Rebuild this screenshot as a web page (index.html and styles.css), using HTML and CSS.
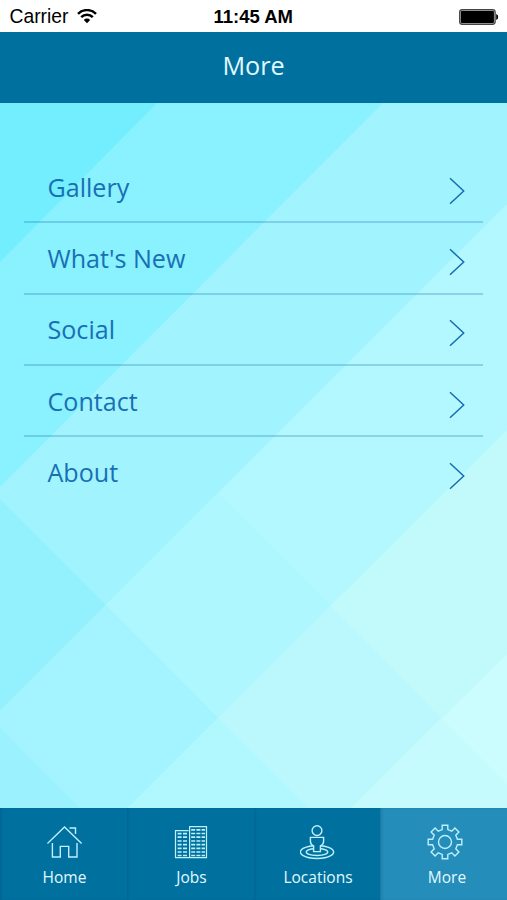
FILE: index.html
```html
<!DOCTYPE html>
<html lang="en">
  <head>
    <meta charset="UTF-8" />
    <meta name="viewport" content="width=device-width, initial-scale=1.0" />
    <title>More</title>
    <link rel="stylesheet" href="styles.css">
  </head>
  <body>
    <div class="status-bar">
      <div class="carrier">
        <span>Carrier</span>
        <svg class="wifi" width="20" height="15" viewBox="0 0 20 15">
          <path d="M1 4.9 A12.6 12.6 0 0 1 19 4.9" />
          <path d="M4.2 8.2 A8.2 8.2 0 0 1 15.8 8.2" />
          <path class="wifi-dot" d="M6.8 10.9 A4.5 4.5 0 0 1 13.2 10.9 L10 14.2 Z" />
        </svg>
      </div>
      <div class="time">11:45 AM</div>
      <div class="battery">
        <svg width="40" height="16" viewBox="0 0 40 16">
          <rect x="0.6" y="0.6" width="35.6" height="14.8" rx="2.6" fill="#aaa" stroke="#444" stroke-width="1.1" />
          <rect x="1.9" y="1.9" width="33" height="12.2" rx="1" />
          <path d="M37.2 5 Q39.2 5.6 39.2 8 Q39.2 10.4 37.2 11 Z" />
        </svg>
      </div>
    </div>

    <header class="nav-bar">
      <h1>More</h1>
    </header>

    <main class="content">
      <svg class="backdrop" viewBox="0 103 507 705" preserveAspectRatio="none">
        <rect x="0" y="103" width="507" height="705" fill="#72eefe" />
        <!-- diagonal bands -->
        <path fill="#8af1fe" d="M157 103 H507 V808 H0 V262 Z" />
        <path fill="#a1f4fe" d="M383 103 H507 V808 H0 V487 Z" />
        <path fill="#b3f8fe" d="M507 204 V808 H0 V711 Z" />
        <path fill="#c2fafb" d="M507 430 V808 H128 Z" />
        <path fill="#cbfcfe" d="M507 654 V808 H351 Z" />
        <!-- darker tiles at the bottom -->
        <path fill="#93f1fe" d="M0 499 L106 605 L0 711 Z" />
        <path fill="#aff7fe" d="M106 605 L218 493 L331 606 L218 718 Z" />
        <path fill="#a3f4fe" d="M106 605 L218 718 L128 808 H80 L0 727 V711 Z" />
        <path fill="#9bf2fe" d="M0 727 L80 808 H0 Z" />
        <path fill="#bbf8fe" d="M331 606 L441 718 L351 808 H308 L218 718 Z" />
        <path fill="#b1f7fe" d="M218 718 L308 808 H128 Z" />
        <path fill="#c6fbfd" d="M441 718 L507 784 V808 H351 Z" />
      </svg>

      <ul class="menu">
        <li>
          <span>Gallery</span>
          <svg class="chevron" width="16" height="28" viewBox="0 0 16 28"><path d="M1 1.3 L14.7 14 L1 26.7" /></svg>
        </li>
        <li>
          <span>What's New</span>
          <svg class="chevron" width="16" height="28" viewBox="0 0 16 28"><path d="M1 1.3 L14.7 14 L1 26.7" /></svg>
        </li>
        <li>
          <span>Social</span>
          <svg class="chevron" width="16" height="28" viewBox="0 0 16 28"><path d="M1 1.3 L14.7 14 L1 26.7" /></svg>
        </li>
        <li>
          <span>Contact</span>
          <svg class="chevron" width="16" height="28" viewBox="0 0 16 28"><path d="M1 1.3 L14.7 14 L1 26.7" /></svg>
        </li>
        <li>
          <span>About</span>
          <svg class="chevron" width="16" height="28" viewBox="0 0 16 28"><path d="M1 1.3 L14.7 14 L1 26.7" /></svg>
        </li>
      </ul>
    </main>

    <nav class="tab-bar">
      <div class="tab">
        <svg width="36" height="36" viewBox="0 0 36 36">
          <path d="M0.4 19.5 L17.5 3 L34.6 19.5" />
          <path d="M22.5 4 H28.5 V10" />
          <path d="M5.4 19 V33 H13.3 V22.4 H21.7 V33 H30 V19" />
        </svg>
        <span>Home</span>
      </div>
      <div class="tab">
        <svg width="36" height="36" viewBox="0 0 36 36">
          <path d="M14.6 6.6 H1.5 V33.6 H32.5 V2.6 H15.6 V33.6" stroke-width="1.2" />
          <path class="windows" d="M3.6 9.6H7.6M9 9.6H13M3.6 13.2H7.6M9 13.2H13M3.6 17H7.6M9 17H13M3.6 20.6H7.6M9 20.6H13M3.6 24.4H7.6M9 24.4H13M3.6 28H7.6M9 28H13M3.6 31.5H7.6M9 31.5H13" />
          <path class="windows" d="M17.2 5.8H21.2M22.4 5.8H26.4M27.6 5.8H31M17.2 9.5H21.2M22.4 9.5H26.4M27.6 9.5H31M17.2 13.2H21.2M22.4 13.2H26.4M27.6 13.2H31M17.2 17H21.2M22.4 17H26.4M27.6 17H31M17.2 20.6H21.2M22.4 20.6H26.4M27.6 20.6H31M17.2 24.4H21.2M22.4 24.4H26.4M27.6 24.4H31M17.2 28H21.2M22.4 28H26.4M27.6 28H31M17.2 31.5H21.2M22.4 31.5H26.4M27.6 31.5H31" />
        </svg>
        <span>Jobs</span>
      </div>
      <div class="tab">
        <svg width="36" height="36" viewBox="0 0 36 36">
          <circle cx="17" cy="6.6" r="4.9" />
          <path d="M10.4 13.4 H23.6 V17.2 Q23.6 20.4 20.4 22 V27.6 H13.6 V22 Q10.4 20.4 10.4 17.2 Z" />
          <path d="M13.6 21.7 A16.6 6.5 0 1 0 20.4 21.7" />
          <path d="M13.6 24.7 A10.8 3.5 0 1 0 20.4 24.7" />
        </svg>
        <span>Locations</span>
      </div>
      <div class="tab active">
        <svg width="36" height="36" viewBox="0 0 36 36">
          <circle cx="18" cy="18" r="6.5" />
          <path d="M15.2 1.2 H20.8 V5.6 L24.8 7.2 L27.9 4.1 L31.9 8.1 L28.8 11.2 L30.4 15.2 H34.8 V20.8 H30.4 L28.8 24.8 L31.9 27.9 L27.9 31.9 L24.8 28.8 L20.8 30.4 V34.8 H15.2 V30.4 L11.2 28.8 L8.1 31.9 L4.1 27.9 L7.2 24.8 L5.6 20.8 H1.2 V15.2 H5.6 L7.2 11.2 L4.1 8.1 L8.1 4.1 L11.2 7.2 L15.2 5.6 Z" />
        </svg>
        <span>More</span>
      </div>
    </nav>
  </body>
</html>
```
FILE: styles.css
```css
* {
  margin: 0;
  padding: 0;
  box-sizing: border-box;
}

body {
  font-family: 'Open Sans', 'Noto Sans', sans-serif;
  height: 100vh;
  display: flex;
  flex-direction: column;
  overflow: hidden;
}

.status-bar {
  height: 32px;
  display: grid;
  grid-template-columns: 1fr auto 1fr;
  align-items: center;
  padding: 0 8px 0 9.5px;
  background-color: #fff;
  color: #000;
  font-family: 'Liberation Sans', Arial, sans-serif;
  font-size: 19.3px;
  line-height: 34px;
}

.carrier {
  display: flex;
  align-items: center;
  gap: 9px;
}

.wifi {
  margin-top: -1px;
  fill: none;
  stroke: #000;
  stroke-width: 2.5;
}

.wifi .wifi-dot {
  fill: #000;
  stroke: none;
}

.time {
  margin-left: -2px;
  font-size: 18.5px;
  font-weight: bold;
}

.battery {
  display: flex;
  justify-content: flex-end;
}

.nav-bar {
  height: 71px;
  display: flex;
  justify-content: center;
  background-color: #00719f;
  color: #e2faff;
}

.nav-bar h1 {
  font-size: 25.2px;
  font-weight: 400;
  line-height: 67px;
}

.content {
  position: relative;
  flex: 1;
  padding: 49px 24px 0;
}

.backdrop {
  position: absolute;
  top: 0;
  left: 0;
  width: 100%;
  height: 100%;
}

.menu {
  position: relative;
  list-style: none;
}

.menu li {
  height: 71.3px;
  display: flex;
  justify-content: space-between;
  align-items: center;
  padding: 0 18px 0 23.5px;
  border-bottom: 2px solid rgba(20, 105, 170, 0.26);
  color: #1870b4;
  font-size: 25.1px;
}

.menu li:last-child {
  border-bottom-color: transparent;
}

.chevron {
  margin-top: 8px;
  fill: none;
  stroke: #1a6cb0;
  stroke-width: 1.5;
}

.tab-bar {
  height: 92px;
  display: grid;
  grid-template-columns: 127px 127px 126px 127px;
  background-color: #00719f;
}

.tab {
  display: flex;
  flex-direction: column;
  align-items: center;
  padding: 16px 0 0 2px;
  color: #e2faff;
  font-size: 15.5px;
  box-shadow: inset 2px 0 3px -1px rgba(0, 70, 115, 0.35);
}

.tab svg {
  fill: none;
  stroke: #bdf0fb;
  stroke-width: 1.4;
}

.tab .windows {
  stroke-width: 1.7;
}

.tab span {
  margin-top: 6px;
  line-height: 22px;
}

.tab.active {
  padding-left: 7px;
  background-color: #248dba;
}

.tab.active svg {
  margin-left: -4px;
}
```
